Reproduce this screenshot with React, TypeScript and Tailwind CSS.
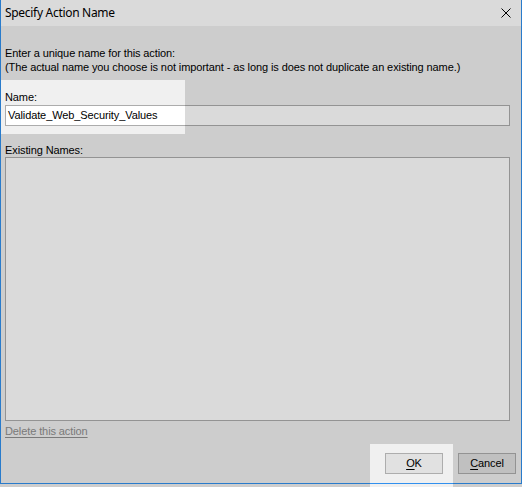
import React from "react";

// Dialog asking for a unique action name, with a dimmed overlay that leaves
// the name field and the OK button lit.
function CloseIcon() {
  return (
    <svg width="10" height="10" viewBox="0 0 10 10" className="block">
      <path d="M0.5 0.5 L9.5 9.5 M9.5 0.5 L0.5 9.5" stroke="#000" strokeWidth="1" />
    </svg>
  );
}

function DialogButton({ children }: { children: React.ReactNode }) {
  return (
    <button
      type="button"
      className="flex h-[21px] w-[58px] items-center justify-center border border-[#adadad] bg-[#e1e1e1] text-black"
    >
      {children}
    </button>
  );
}

export default function App() {
  return (
    <div className="relative h-[487px] w-[522px] overflow-hidden bg-[#f0f0f0] font-['Liberation_Sans',Arial,sans-serif] text-[11px] leading-[13px] tracking-[-0.1px] text-black">
      <div className="flex h-[484px] w-[522px] flex-col border-x border-b border-[#3190ee] bg-[#f0f0f0]">
        <div className="flex h-[26px] shrink-0 items-center justify-between bg-white pl-[4px] pr-[10px]">
          <span className="font-['Noto_Sans',sans-serif] text-[12px] leading-[16px] tracking-[-0.3px]">
            Specify Action Name
          </span>
          <CloseIcon />
        </div>

        <div className="flex flex-1 flex-col pl-[4px] pr-[5px]">
          <div className="mt-[20px] leading-[14px]">
            <p>Enter a unique name for this action:</p>
            <p>
              (The actual name you choose is not important - as long is does not
              duplicate an existing name.)
            </p>
          </div>

          <label className="mt-[17px]">Name:</label>
          <div className="mt-[1px] flex h-[21px] w-[505px] items-center border border-[#acacac] bg-white pl-[2px]">
            Validate_Web_Security_Values
          </div>

          <label className="mt-[18px]">Existing Names:</label>
          <div className="h-[264px] w-[505px] border border-[#acacac] bg-white" />

          <a className="mt-[4px] w-fit text-[#8f8f8f] underline underline-offset-[2px]">
            Delete this action
          </a>

          <div className="mt-[15px] flex justify-end gap-[15px]">
            <DialogButton>
              <span className="underline underline-offset-[2px]">O</span>K
            </DialogButton>
            <DialogButton>
              <span className="underline underline-offset-[2px]">C</span>ancel
            </DialogButton>
          </div>
        </div>
      </div>

      {/* dim layer with two cut-outs */}
      <svg
        className="pointer-events-none absolute inset-0"
        width="522"
        height="487"
        viewBox="0 0 522 487"
      >
        <path
          fillRule="evenodd"
          fill="#000"
          fillOpacity="0.146"
          d="M0 0H522V487H0Z M1 80H185V134H1Z M370 444H453V487H370Z"
        />
      </svg>
    </div>
  );
}
